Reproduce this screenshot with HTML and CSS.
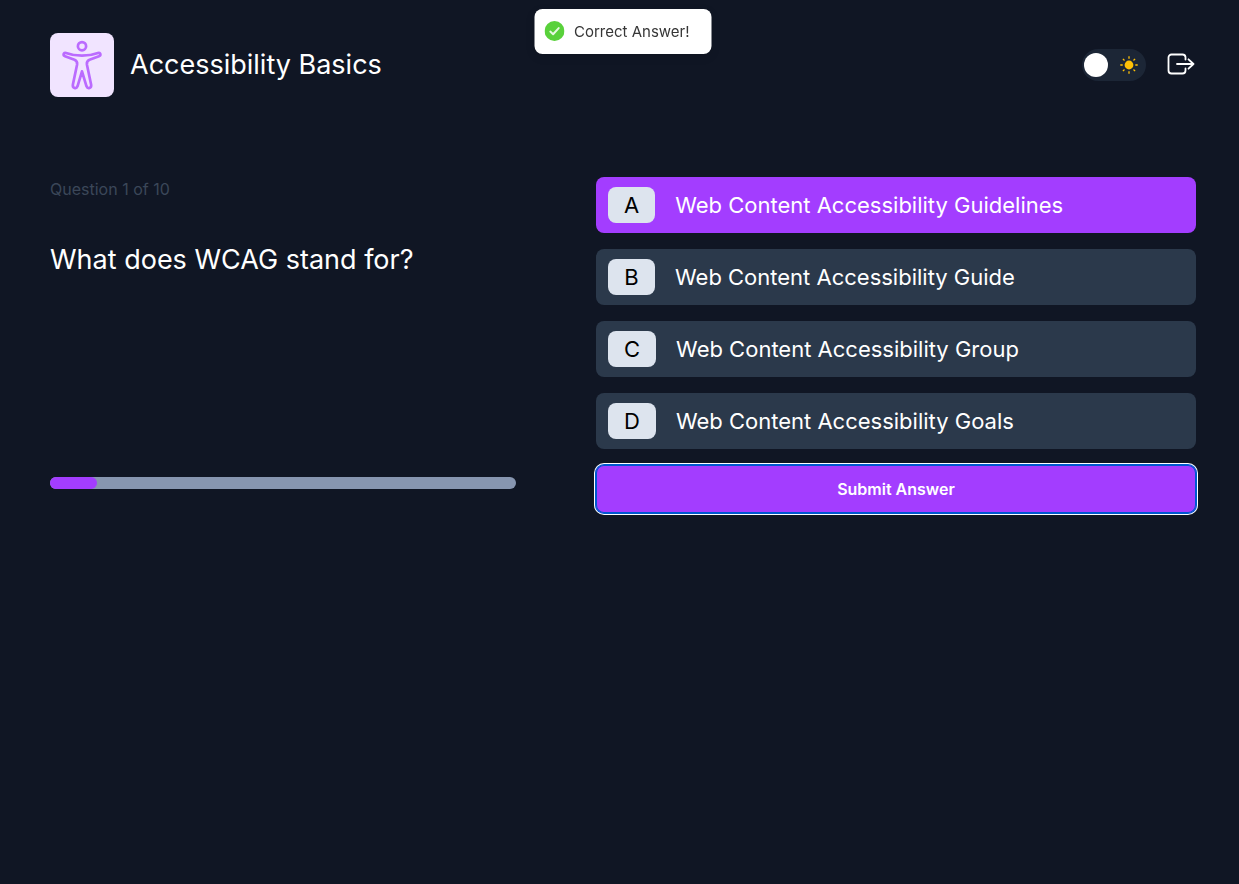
FILE: index.html
```html
<!DOCTYPE html>
<html lang="en">
<head>
  <meta charset="utf-8">
  <meta name="viewport" content="width=device-width, initial-scale=1">
  <title>Accessibility Basics</title>
  <link rel="stylesheet" href="styles.css">
</head>
<body>
  <div class="toast" role="status">
    <svg class="toast-icon" viewBox="0 0 20 20" aria-hidden="true">
      <circle cx="10" cy="10" r="10" fill="#59d13b"/>
      <path d="M5.800 10.600 8.600 13.200 14.200 7.100" fill="none" stroke="#e6f9e0" stroke-width="2" stroke-linecap="round" stroke-linejoin="round"/>
    </svg>
    <span>Correct Answer!</span>
  </div>

  <header class="header">
    <div class="brand">
      <svg class="brand-icon" viewBox="0 0 64 64" aria-hidden="true">
        <g fill="none" stroke="#bb6bff" stroke-width="2.700" stroke-linejoin="round" stroke-linecap="round">
          <circle cx="32" cy="13.200" r="4.100"/>
          <path d="M16 20C21 21.900 26.500 22.700 32 22.700S43 21.900 48 20C50.400 19.100 51.400 22.300 49 23.200L39.500 26.700C37.300 27.600 36.600 29.200 36.900 31.500L41.100 51.500C41.800 55.200 37.700 56.300 36.500 53.300L32 38.300 27.500 53.300C26.300 56.300 22.200 55.200 22.900 51.500L27.100 31.500C27.400 29.200 26.700 27.600 24.500 26.700L15 23.200C12.600 22.300 13.600 19.100 16 20Z"/>
        </g>
      </svg>
      <h1 class="brand-title">Accessibility Basics</h1>
    </div>
    <div class="actions">
      <label class="switch">
        <input class="switch-input" type="checkbox" role="switch" aria-label="Light theme">
        <span class="switch-knob"></span>
        <svg class="switch-sun" viewBox="0 0 18 18" aria-hidden="true">
          <circle cx="9" cy="9" r="4.400" fill="#ffc107"/>
          <path d="M9 .3V2.700M9 15.300V17.700M.3 9H2.700M15.300 9H17.700M2.900 2.900 4.500 4.500M13.500 13.500 15.100 15.100M2.900 15.100 4.500 13.500M13.500 4.500 15.100 2.900" fill="none" stroke="#ffc107" stroke-width="1.300"/>
        </svg>
      </label>
      <button class="exit" type="button" aria-label="Log out">
        <svg class="exit-icon" viewBox="0 0 28 22" aria-hidden="true">
          <path d="M18.500 6.500V4A3 3 0 0 0 15.500 1.500H4.500A3 3 0 0 0 1.500 4.500V17.500A3 3 0 0 0 4.500 20.500H15.500A3 3 0 0 0 18.500 17.500V15.500M10 11H26.500M21.500 6.300 26.500 11 21.500 15.700" fill="none" stroke="#fff" stroke-width="1.800" stroke-linecap="round" stroke-linejoin="round"/>
        </svg>
      </button>
    </div>
  </header>

  <main class="quiz">
    <section class="question">
      <div>
        <p class="question-count">Question 1 of 10</p>
        <h2 class="question-text" id="question">What does WCAG stand for?</h2>
      </div>
      <div class="progress" role="progressbar" aria-label="Quiz progress" aria-valuemin="0" aria-valuemax="10" aria-valuenow="1">
        <div class="progress-fill" style="width: 10%"></div>
      </div>
    </section>

    <form class="answers" aria-labelledby="question">
      <label class="option">
        <input class="option-input" type="radio" name="answer" value="a" checked>
        <span class="option-key">A</span>
        <span>Web Content Accessibility Guidelines</span>
      </label>
      <label class="option">
        <input class="option-input" type="radio" name="answer" value="b">
        <span class="option-key">B</span>
        <span>Web Content Accessibility Guide</span>
      </label>
      <label class="option">
        <input class="option-input" type="radio" name="answer" value="c">
        <span class="option-key">C</span>
        <span>Web Content Accessibility Group</span>
      </label>
      <label class="option">
        <input class="option-input" type="radio" name="answer" value="d">
        <span class="option-key">D</span>
        <span>Web Content Accessibility Goals</span>
      </label>
      <button class="submit" type="button">Submit Answer</button>
    </form>
  </main>
</body>
</html>
```

FILE: styles.css
```css
* {
  box-sizing: border-box;
}

body {
  margin: 0;
  padding: 33px 43px 33px 50px;
  min-height: 100vh;
  background: #101624;
  color: #fff;
  font-family: Inter, "Liberation Sans", sans-serif;
  font-size: 16px;
}

.toast {
  position: fixed;
  top: 9px;
  left: 50%;
  transform: translateX(-50%);
  display: flex;
  align-items: center;
  gap: 10px;
  min-width: 177px;
  height: 45px;
  margin-left: 3px;
  padding: 0 20px 1px 10px;
  border-radius: 8px;
  background: #fff;
  color: #363636;
  font-size: 15px;
  white-space: nowrap;
  box-shadow: 0 3px 10px rgba(0, 0, 0, 0.1);
}

.toast-icon {
  width: 20px;
  height: 20px;
}

.header,
.brand,
.actions {
  display: flex;
  align-items: center;
}

.header {
  justify-content: space-between;
}

.brand {
  gap: 16px;
}

.brand-icon {
  width: 64px;
  height: 64px;
  border-radius: 8px;
  background: #f1e4ff;
}

.brand-title,
.question-text {
  margin: 0;
  font-size: 27px;
  line-height: 36px;
  font-weight: 400;
}

.actions {
  gap: 20px;
}

.switch {
  position: relative;
  display: flex;
  align-items: center;
  justify-content: space-between;
  width: 64px;
  height: 32px;
  padding: 0 8px 0 2px;
  border-radius: 16px;
  background: #1c2636;
}

.switch-input,
.option-input {
  position: absolute;
  inset: 0;
  margin: 0;
  width: 100%;
  height: 100%;
  opacity: 0;
  cursor: pointer;
}

.switch-knob {
  width: 24px;
  height: 24px;
  border-radius: 50%;
  background: #fff;
}

.switch-sun {
  width: 18px;
  height: 18px;
}

.exit {
  display: flex;
  padding: 0 1px 2px;
  border: 0;
  background: none;
}

.exit-icon {
  width: 28px;
  height: 22px;
}

.quiz {
  display: grid;
  grid-template-columns: minmax(0, 466fr) minmax(0, 600fr);
  gap: 80px;
  margin-top: 80px;
}

.question {
  display: flex;
  flex-direction: column;
  justify-content: space-between;
  padding-bottom: 24px;
}

.question-count {
  margin: 0 0 41px;
  color: #3b4759;
  font-size: 16px;
  line-height: 24px;
}

.progress {
  height: 12px;
  border-radius: 6px;
  background: #8796b0;
}

.progress-fill {
  height: 100%;
  border-radius: 6px;
  background: #a33dff;
}

.answers {
  display: flex;
  flex-direction: column;
  gap: 16px;
}

.option {
  position: relative;
  display: flex;
  align-items: center;
  gap: 20px;
  min-height: 56px;
  padding: 10px 12px;
  border-radius: 8px;
  background: #2b394b;
  font-size: 22px;
  line-height: 36px;
}

.option:has(.option-input:checked) {
  background: #a33dff;
}

.option-key {
  min-width: 47px;
  padding: 0 16px;
  border-radius: 8px;
  background: #dde4ee;
  color: #000;
  text-align: center;
}

.submit {
  height: 48px;
  border: 0;
  border-radius: 8px;
  background: #a33dff;
  color: #fff;
  font: 600 16px Inter, "Liberation Sans", sans-serif;
  box-shadow: inset 0 0 0 1px #0058d0, 0 0 0 1px #0058d0, 0 0 0 2px #fff;
}
```
